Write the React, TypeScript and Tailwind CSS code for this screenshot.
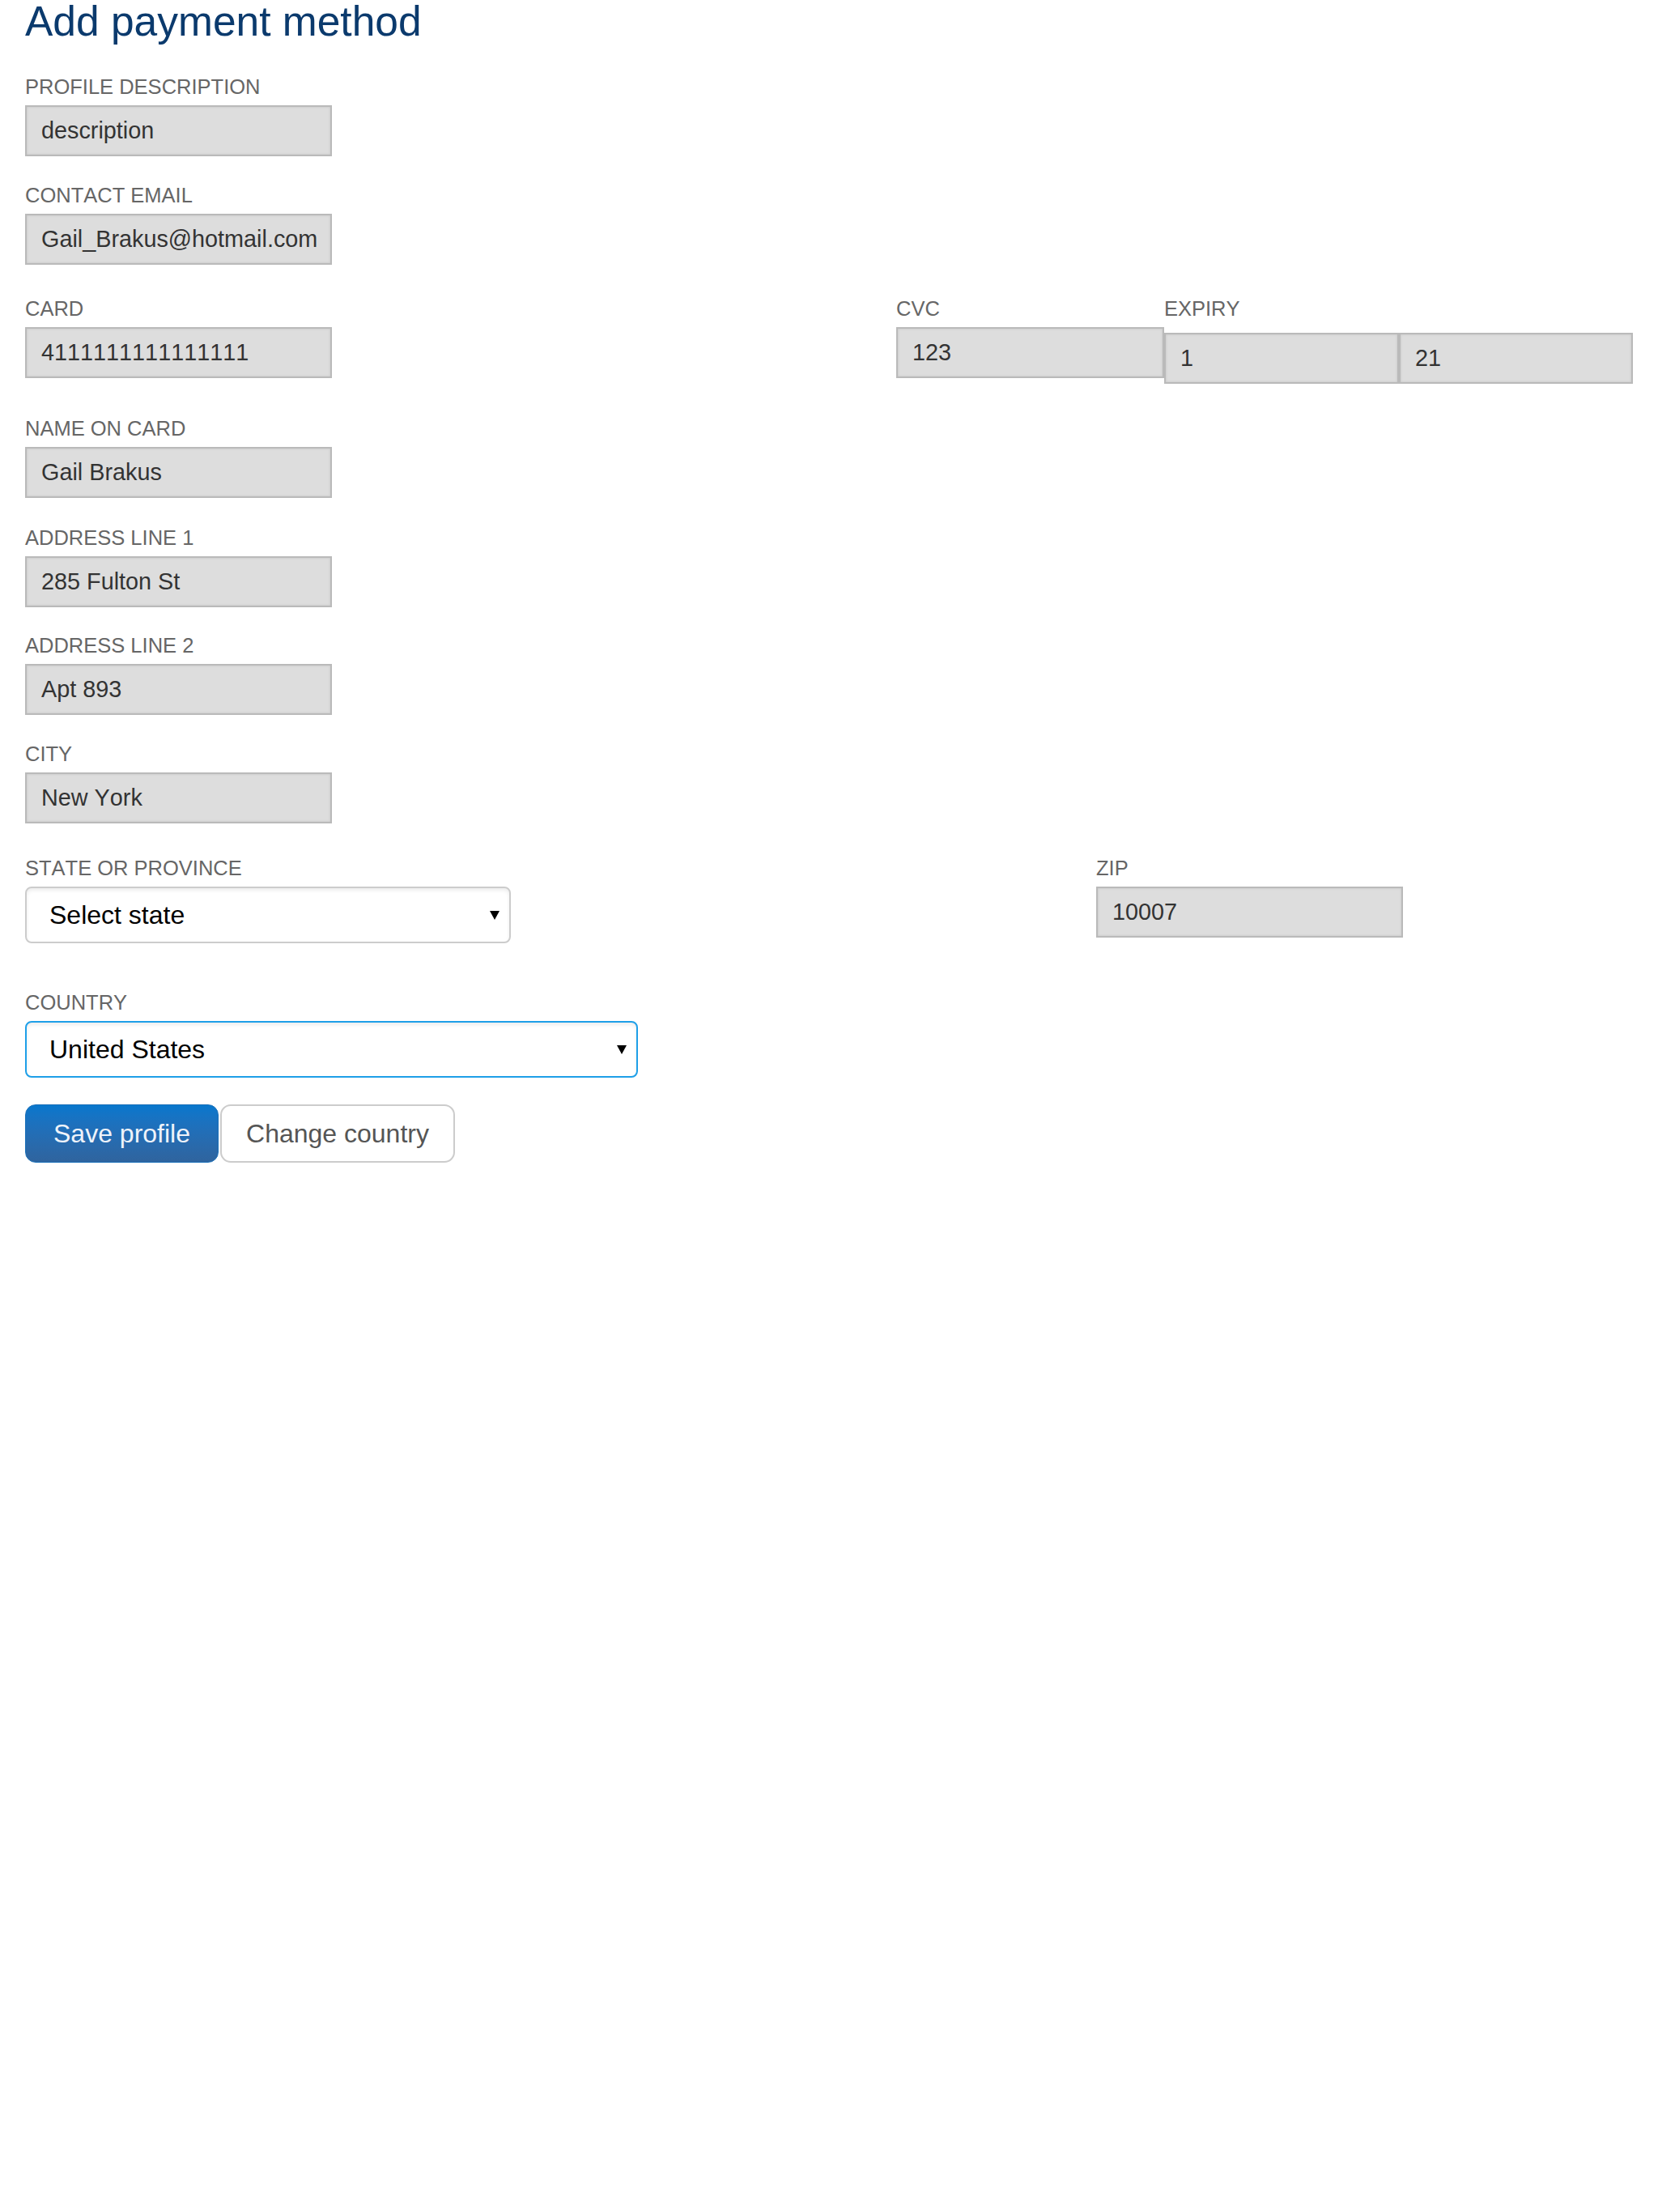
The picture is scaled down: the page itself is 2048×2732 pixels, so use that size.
import React from 'react';

const Label: React.FC<{ children: React.ReactNode }> = ({ children }) => (
    <div className="h-[30px] leading-[30px] text-[25.5px] text-[#666] uppercase mb-[8px] whitespace-nowrap">{children}</div>
);

const Field: React.FC<{ value: string; className?: string }> = ({ value, className = 'w-[379px]' }) => (
    <div
        className={`${className} h-[63px] flex items-center pl-[18px] bg-[#dddddd] border-2 border-[#bababa] shadow-[inset_0_0_3px_rgba(0,0,0,0.12)] text-[28.8px] text-[#333] whitespace-nowrap overflow-hidden`}
    >
        {value}
    </div>
);

const Arrow: React.FC = () => (
    <svg width="12" height="12" viewBox="0 0 12 12" className="shrink-0">
        <polygon points="0,1 12,1 6,12" fill="#000" />
    </svg>
);

const Select: React.FC<{ value: string; className: string; focused?: boolean }> = ({ value, className, focused }) => (
    <div
        className={`${className} h-[70px] flex items-center justify-between pl-[28px] pr-[12px] bg-white rounded-[8px] border-2 ${
            focused ? 'border-[#1e9fe8]' : 'border-[#cccccc]'
        } shadow-[inset_0_3px_4px_rgba(0,0,0,0.07)] text-[32px] text-black`}
    >
        <span>{value}</span>
        <Arrow />
    </div>
);

const App: React.FC = () => {
    return (
        <div className="w-[2048px] min-h-[2732px] bg-white px-[31px] font-[family-name:Liberation_Sans,Arial,sans-serif] [font-kerning:none]">
            <h1 className="text-[51.5px] leading-[52px] text-[#0b3a6d] whitespace-nowrap">Add payment method</h1>

            <div className="mt-[40px]">
                <Label>Profile description</Label>
                <Field value="description" />
            </div>

            <div className="mt-[33px]">
                <Label>Contact email</Label>
                <Field value="Gail_Brakus@hotmail.com" />
            </div>

            {/* card / cvc / expiry */}
            <div className="mt-[39px] flex">
                <div className="flex-1">
                    <Label>Card</Label>
                    <Field value="4111111111111111" />
                </div>
                <div className="w-[331px]">
                    <Label>CVC</Label>
                    <Field value="123" className="w-[331px]" />
                </div>
                <div className="w-[579px]">
                    <Label>Expiry</Label>
                    <div className="flex pt-[7px]">
                        <Field value="1" className="w-[290px]" />
                        <Field value="21" className="w-[289px]" />
                    </div>
                </div>
            </div>

            <div className="mt-[40px]">
                <Label>Name on card</Label>
                <Field value="Gail Brakus" />
            </div>

            <div className="mt-[34px]">
                <Label>Address line 1</Label>
                <Field value="285 Fulton St" />
            </div>

            <div className="mt-[32px]">
                <Label>Address line 2</Label>
                <Field value="Apt 893" />
            </div>

            <div className="mt-[33px]">
                <Label>City</Label>
                <Field value="New York" />
            </div>

            <div className="mt-[40px] flex">
                <div className="flex-1">
                    <Label>State or province</Label>
                    <Select value="Select state" className="w-[600px]" />
                </div>
                <div className="w-[663px]">
                    <Label>Zip</Label>
                    <Field value="10007" />
                </div>
            </div>

            <div className="mt-[58px]">
                <Label>Country</Label>
                <Select value="United States" className="w-[757px]" focused />
            </div>

            <div className="mt-[33px] flex gap-[2px]">
                <button className="w-[239px] h-[72px] rounded-[13px] bg-gradient-to-b from-[#0677cd] to-[#2f649e] text-[32px] text-[#eef3fa] border border-[#1a6fb8]">
                    Save profile
                </button>
                <button className="w-[290px] h-[72px] rounded-[13px] bg-white border-2 border-[#cccccc] text-[32px] text-[#555]">
                    Change country
                </button>
            </div>
        </div>
    );
};

export default App;
